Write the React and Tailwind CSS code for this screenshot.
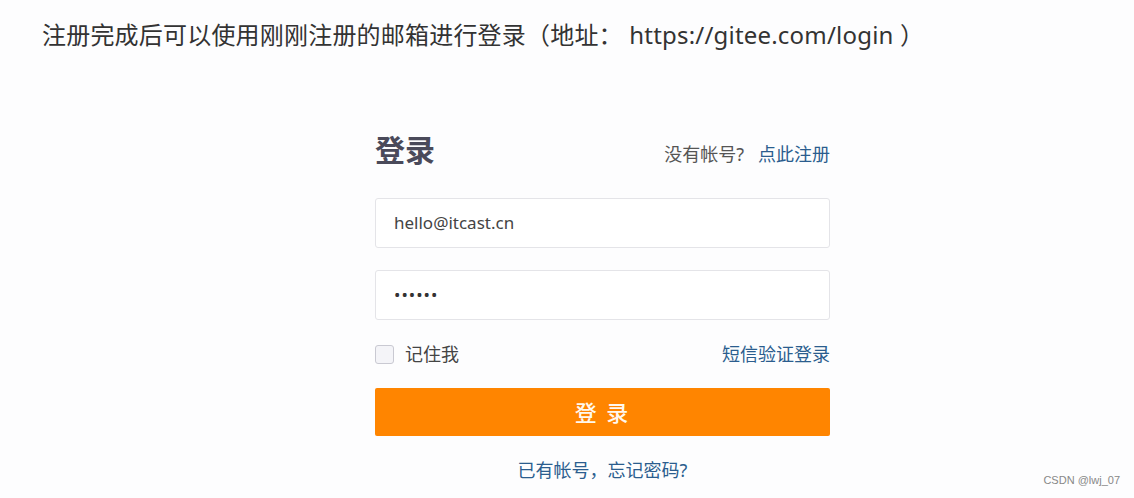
export default function App() {
  return (
    <div className="relative h-[498px] w-[1134px] bg-[#fdfdfe] font-['Noto_Sans','Noto_Sans_CJK_SC',sans-serif] overflow-hidden">
      <p className="pl-[42px] pt-[20px] text-[24px] leading-[30px] text-[#333] tracking-[0.2px]">
        注册完成后可以使用刚刚注册的邮箱进行登录（地址： https://gitee.com/login ）
      </p>

      <div className="ml-[375px] mt-[82px] w-[455px]">
        <div className="flex items-baseline justify-between h-[36px]">
          <h1 className="text-[30px] leading-[36px] font-bold text-[#4a4a5a]">登录</h1>
          <div className="text-[18px] text-[#555]">
            没有帐号?&nbsp;&nbsp; <span className="text-[#2b5d8e]">点此注册</span>
          </div>
        </div>

        <div className="mt-[30px] flex flex-col gap-[22px]">
          <div className="h-[50px] border border-[#e4e4e8] rounded-[3px] bg-white flex items-center px-[18px] text-[17px] text-[#444]">
            hello@itcast.cn
          </div>
          <div className="h-[50px] border border-[#e4e4e8] rounded-[3px] bg-white flex items-center px-[18px] text-[17px] text-[#333] tracking-[1px]">
            ••••••
          </div>
        </div>

        <div className="mt-[22px] h-[24px] flex items-center justify-between">
          <label className="flex items-center gap-[11px] text-[18px] text-[#444]">
            <span className="w-[19px] h-[19px] rounded-[3px] border border-[#c9c9d2] bg-[#f4f4f8]" />
            记住我
          </label>
          <span className="text-[18px] text-[#2b5d8e]">短信验证登录</span>
        </div>

        <button className="mt-[22px] w-full h-[48px] rounded-[2px] bg-[#ff8500] text-[#fff8ee] text-[22px] font-medium tracking-[2px] flex items-center justify-center">
          登 录
        </button>

        <div className="mt-[22px] text-center text-[18px] leading-[24px] text-[#2b5d8e]">
          已有帐号，忘记密码?
        </div>
      </div>

      <span className="absolute right-[14px] bottom-[10px] text-[11px] text-[#888] font-['Liberation_Sans',sans-serif]">
        CSDN @lwj_07
      </span>
    </div>
  );
}
